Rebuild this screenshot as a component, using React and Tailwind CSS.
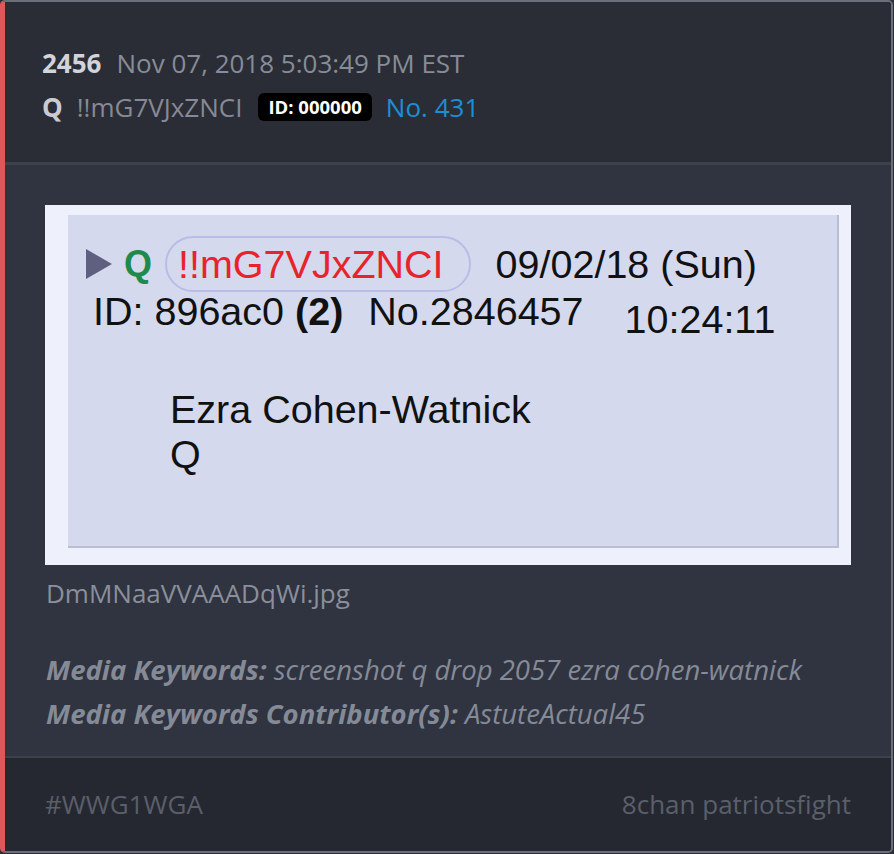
export default function App() {
  const inner = { fontFamily: '"Liberation Sans", Arial, sans-serif' };
  return (
    <div className="w-[894px] h-[854px] bg-[#2b2e36]" style={{ fontFamily: '"Open Sans", sans-serif' }}>
      <div className="w-[893px] h-[853px] flex flex-col rounded-[5px] border-t-2 border-r-2 border-b-2 border-l-[5px] border-t-[#6b6f79] border-r-[#6b6f79] border-b-[#6b6f79] border-l-[#e0575b] overflow-hidden">
        {/* header */}
        <div className="bg-[#2a2d35] pl-[37px] pt-[39px] pb-[33px] border-b-[3px] border-[#3d414b]">
          <div className="h-[44px] flex items-center text-[26px]">
            <span className="font-bold text-[#d2d4da]">2456</span>
            <span className="ml-[15px] text-[#878c98]">Nov 07, 2018 5:03:49 PM EST</span>
          </div>
          <div className="h-[44px] flex items-center text-[26px]">
            <span className="font-bold text-[#c9cbd1]">Q</span>
            <span className="ml-[14px] text-[#858a96]">!!mG7VJxZNCI</span>
            <span className="ml-[16px] bg-black text-white font-bold text-[18.5px] leading-[28px] px-[10px] rounded-[6px]">ID: 000000</span>
            <span className="ml-[14px] text-[#1a8fd6]">No. 431</span>
          </div>
        </div>
        {/* body */}
        <div className="flex-1 bg-[#2f3440] pl-[40px] pr-[40px] pt-[40px] border-b-2 border-[#3d414b]">
          <div className="w-[806px] h-[360px] bg-[#eef0fb] pt-[10px] pl-[23px] pr-[12px] pb-[17px]">
            <div className="h-full bg-[#d5d9ee] border-r-2 border-b-2 border-[#babed2] pt-[21px] text-[39.5px] text-[#111] leading-[44px]" style={inner}>
              <div className="flex items-center h-[56px] pl-[18px]">
                <svg width="26" height="30" viewBox="0 0 26 30" className="mr-[12px]">
                  <polygon points="0,0 26,15 0,30" fill="#5f5f80" />
                </svg>
                <span className="text-[36px] font-bold text-[#1f8a4c] mr-[13px]">Q</span>
                <span className="text-[#e8232c] border-2 border-[#b9bde6] rounded-[28px] h-[56px] leading-[52px] pl-[11px] pr-[25px] mr-[25px]">!!mG7VJxZNCI</span>
                <span>09/02/18 (Sun)</span>
              </div>
              <div className="flex items-start pl-[25px] -mt-[3px]">
                <span className="whitespace-pre">ID: 896ac0 <b>(2)</b></span>
                <span className="ml-[25px]">No.2846457</span>
                <span className="ml-[41px] mt-[8px]">10:24:11</span>
              </div>
              <div className="pl-[102px] mt-[46px] leading-[45px]">
                <div>Ezra Cohen-Watnick</div>
                <div>Q</div>
              </div>
            </div>
          </div>
          <div className="mt-[10px] text-[26px] leading-[36px] text-[#8a8f9b] pl-[1px]">DmMNaaVVAAADqWi.jpg</div>
          <div className="mt-[37px] text-[27.5px] leading-[44px] italic text-[#858a97] pl-[1px]">
            <div><b>Media Keywords:</b> screenshot q drop 2057 ezra cohen-watnick</div>
            <div><b>Media Keywords Contributor(s):</b> AstuteActual45</div>
          </div>
        </div>
        {/* footer */}
        <div className="flex-1 max-h-[93px] bg-[#252830] flex items-center justify-between pl-[40px] pr-[40px] text-[26px] text-[#5a5f6b]">
          <span>#WWG1WGA</span>
          <span>8chan patriotsfight</span>
        </div>
      </div>
    </div>
  );
}
